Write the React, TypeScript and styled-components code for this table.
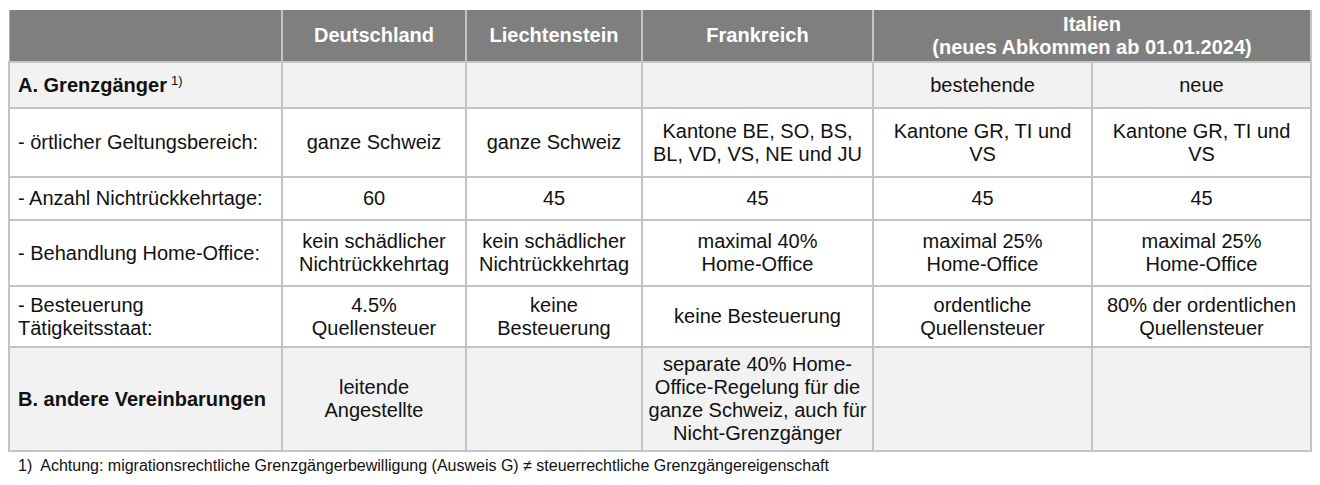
import React from 'react';
import styled, { createGlobalStyle } from 'styled-components';

const GlobalStyle = createGlobalStyle`
  body {
    margin: 0;
    padding: 10px 8px 0 8px;
    background: #ffffff;
    font-family: "Liberation Sans", Arial, sans-serif;
    color: #111111;
  }
`;

const Table = styled.table`
  border-collapse: collapse;
  table-layout: fixed;
  width: 1302px;
  font-size: 20px;
  line-height: 23px;
`;

const HeadRow = styled.tr`
  height: 52px;
  background: #7f7f7f;
`;

const Row = styled.tr<{ $h: number; $shaded?: boolean }>`
  height: ${(p) => p.$h}px;
  background: ${(p) => (p.$shaded ? '#f2f2f2' : '#ffffff')};
`;

const Th = styled.th`
  color: #ffffff;
  font-weight: bold;
  text-align: center;
  vertical-align: middle;
  padding: 0 4px;
  border: 2px solid #c4c4c4;
  border-top: none;
  &:first-child {
    border-left: 1px solid #b0b0b0;
  }
`;

const Label = styled.td<{ $bold?: boolean }>`
  text-align: left;
  vertical-align: middle;
  padding: 0 9px 0 8px;
  font-weight: ${(p) => (p.$bold ? 'bold' : 'normal')};
  border: 2px solid #c4c4c4;
`;

const Cell = styled.td`
  text-align: center;
  vertical-align: middle;
  padding: 0 4px;
  border: 2px solid #c4c4c4;
`;

const Sup = styled.sup`
  font-size: 13px;
  font-weight: normal;
  vertical-align: 7px;
  line-height: 0;
  margin-left: 4px;
`;

const Footnote = styled.p`
  margin: 5px 0 0 10px;
  font-size: 16px;
  color: #111111;
  white-space: pre;
`;

const cols = [273, 184, 176, 231, 219, 219];

export default function App() {
  return (
    <>
      <GlobalStyle />
      <Table>
        <colgroup>
          {cols.map((w, i) => (
            <col key={i} style={{ width: w }} />
          ))}
        </colgroup>
        <thead>
          <HeadRow>
            <Th />
            <Th>Deutschland</Th>
            <Th>Liechtenstein</Th>
            <Th>Frankreich</Th>
            <Th colSpan={2}>
              Italien
              <br />
              (neues Abkommen ab 01.01.2024)
            </Th>
          </HeadRow>
        </thead>
        <tbody>
          <Row $h={46} $shaded>
            <Label $bold>
              A. Grenzgänger<Sup>1)</Sup>
            </Label>
            <Cell />
            <Cell />
            <Cell />
            <Cell>bestehende</Cell>
            <Cell>neue</Cell>
          </Row>
          <Row $h={69}>
            <Label>- örtlicher Geltungsbereich:</Label>
            <Cell>ganze Schweiz</Cell>
            <Cell>ganze Schweiz</Cell>
            <Cell>
              Kantone BE, SO, BS,
              <br />
              BL, VD, VS, NE und JU
            </Cell>
            <Cell>
              Kantone GR, TI und
              <br />
              VS
            </Cell>
            <Cell>
              Kantone GR, TI und
              <br />
              VS
            </Cell>
          </Row>
          <Row $h={43}>
            <Label>- Anzahl Nichtrückkehrtage:</Label>
            <Cell>60</Cell>
            <Cell>45</Cell>
            <Cell>45</Cell>
            <Cell>45</Cell>
            <Cell>45</Cell>
          </Row>
          <Row $h={66}>
            <Label>- Behandlung Home-Office:</Label>
            <Cell>
              kein schädlicher
              <br />
              Nichtrückkehrtag
            </Cell>
            <Cell>
              kein schädlicher
              <br />
              Nichtrückkehrtag
            </Cell>
            <Cell>
              maximal 40%
              <br />
              Home-Office
            </Cell>
            <Cell>
              maximal 25%
              <br />
              Home-Office
            </Cell>
            <Cell>
              maximal 25%
              <br />
              Home-Office
            </Cell>
          </Row>
          <Row $h={61}>
            <Label>
              - Besteuerung
              <br />
              Tätigkeitsstaat:
            </Label>
            <Cell>
              4.5%
              <br />
              Quellensteuer
            </Cell>
            <Cell>
              keine
              <br />
              Besteuerung
            </Cell>
            <Cell>keine Besteuerung</Cell>
            <Cell>
              ordentliche
              <br />
              Quellensteuer
            </Cell>
            <Cell>
              80% der ordentlichen
              <br />
              Quellensteuer
            </Cell>
          </Row>
          <Row $h={104} $shaded>
            <Label $bold>B. andere Vereinbarungen</Label>
            <Cell>
              leitende
              <br />
              Angestellte
            </Cell>
            <Cell />
            <Cell>
              separate 40% Home-
              <br />
              Office-Regelung für die
              <br />
              ganze Schweiz, auch für
              <br />
              Nicht-Grenzgänger
            </Cell>
            <Cell />
            <Cell />
          </Row>
        </tbody>
      </Table>
      <Footnote>
        {'1)  Achtung: migrationsrechtliche Grenzgängerbewilligung (Ausweis G) ≠ steuerrechtliche Grenzgängereigenschaft'}
      </Footnote>
    </>
  );
}
